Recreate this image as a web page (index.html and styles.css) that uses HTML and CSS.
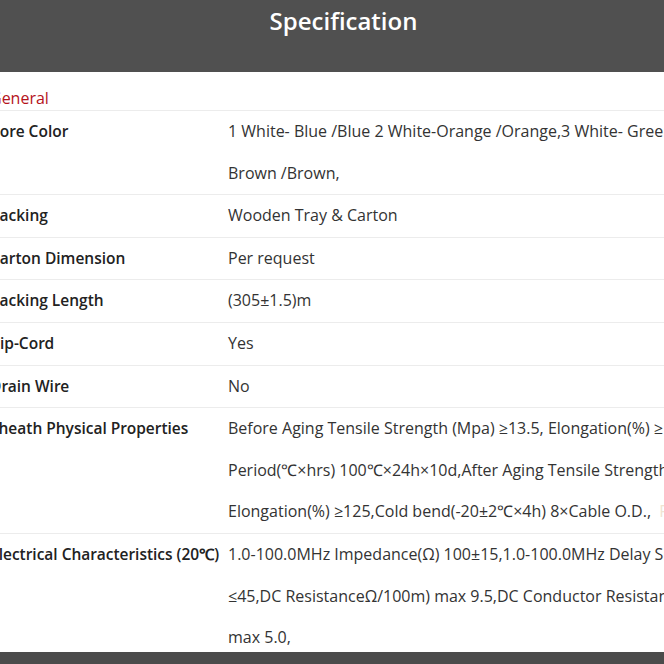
FILE: index.html
```html
<!DOCTYPE html>
<html lang="en">
<head>
<meta charset="utf-8">
<title>Specification</title>
<link rel="stylesheet" href="styles.css">
</head>
<body>
<div class="page">
  <header class="banner">
    <h1 class="banner-title">Specification</h1>
  </header>
  <section class="spec">
    <h2 class="spec-group">General</h2>
    <div class="spec-row">
      <div class="spec-label">Core Color</div>
      <div class="spec-value">1 White- Blue /Blue 2 White-Orange /Orange,3 White- Green /Green,4 White-<br>Brown /Brown,</div>
    </div>
    <div class="spec-row">
      <div class="spec-label">Packing</div>
      <div class="spec-value">Wooden Tray &amp; Carton</div>
    </div>
    <div class="spec-row">
      <div class="spec-label">Carton Dimension</div>
      <div class="spec-value">Per request</div>
    </div>
    <div class="spec-row">
      <div class="spec-label">Packing Length</div>
      <div class="spec-value">(305±1.5)m</div>
    </div>
    <div class="spec-row">
      <div class="spec-label">Rip-Cord</div>
      <div class="spec-value">Yes</div>
    </div>
    <div class="spec-row">
      <div class="spec-label">Drain Wire</div>
      <div class="spec-value">No</div>
    </div>
    <div class="spec-row">
      <div class="spec-label">Sheath Physical Properties</div>
      <div class="spec-value">Before Aging Tensile Strength (Mpa) ≥13.5, Elongation(%) ≥150,Aging<br>Period(℃×hrs) 100℃×24h×10d,After Aging Tensile Strength(Mpa) ≥12.5,<br>Elongation(%) ≥125,Cold bend(-20±2℃×4h) 8×Cable O.D.,&nbsp; <span class="faint">P</span></div>
    </div>
    <div class="spec-row">
      <div class="spec-label">Electrical Characteristics (20℃)</div>
      <div class="spec-value">1.0-100.0MHz Impedance(Ω) 100±15,1.0-100.0MHz Delay Skew(ns/100m)<br>≤45,DC ResistanceΩ/100m) max 9.5,DC Conductor Resistance Unbalance(%)<br>max 5.0,</div>
    </div>
  </section>
</div>
<div class="footer-bar"></div>
</body>
</html>
```
FILE: styles.css
```css
html, body {
  margin: 0;
  padding: 0;
  overflow: hidden;
  background: #ffffff;
}
body {
  font-family: "Open Sans", "Liberation Sans", sans-serif;
  color: #333333;
}
.page {
  width: 707px;
  margin-left: -10px;
}
.banner {
  background: #505050;
  height: 72px;
  box-sizing: border-box;
  padding-top: 4px;
  text-align: center;
}
.banner-title {
  margin: 0;
  font-family: "Open Sans SemiBold", "Open Sans", sans-serif;
  font-size: 24px;
  font-weight: 600;
  line-height: 33px;
  color: #ffffff;
}
.spec-group {
  margin: 0;
  padding-top: 14px;
  font-size: 16px;
  font-weight: 400;
  line-height: 24px;
  color: #b5121b;
}
.spec-row {
  display: grid;
  grid-template-columns: 238px 1fr;
  border-top: 1px solid #ececec;
  font-size: 16px;
  line-height: 41.6px;
}
.spec-label {
  font-family: "Open Sans SemiBold", "Open Sans", sans-serif;
  font-size: 15.5px;
  font-weight: 600;
  color: #222222;
  white-space: nowrap;
}
.spec-value {
  white-space: nowrap;
  color: #333333;
}
.faint {
  color: #efe4d2;
}
.footer-bar {
  position: fixed;
  left: 0;
  right: 0;
  bottom: 0;
  height: 12px;
  background: #4b4b4b;
}
```
